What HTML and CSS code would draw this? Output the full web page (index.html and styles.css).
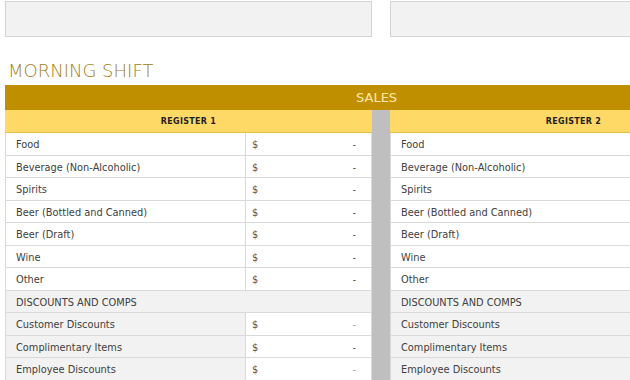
FILE: index.html
```html
<!DOCTYPE html>
<html>
<head>
<meta charset="utf-8">
<link rel="stylesheet" href="styles.css">
</head>
<body>
<div class="page">
  <div class="top">
    <div class="box box-a"></div>
    <div class="box box-b"></div>
  </div>
  <h1 class="title">MORNING SHIFT</h1>
  <div class="sales">SALES</div>
  <div class="tables">
    <div class="reg">
      <div class="head">REGISTER 1</div>
      <div class="row"><div class="lbl">Food</div><div class="val"><span>$</span><span>-</span></div></div>
      <div class="row"><div class="lbl">Beverage (Non-Alcoholic)</div><div class="val"><span>$</span><span>-</span></div></div>
      <div class="row"><div class="lbl">Spirits</div><div class="val"><span>$</span><span>-</span></div></div>
      <div class="row"><div class="lbl">Beer (Bottled and Canned)</div><div class="val"><span>$</span><span>-</span></div></div>
      <div class="row"><div class="lbl">Beer (Draft)</div><div class="val"><span>$</span><span>-</span></div></div>
      <div class="row"><div class="lbl">Wine</div><div class="val"><span>$</span><span>-</span></div></div>
      <div class="row"><div class="lbl">Other</div><div class="val"><span>$</span><span>-</span></div></div>
      <div class="row section"><div class="lbl span">DISCOUNTS AND COMPS</div></div>
      <div class="row disc"><div class="lbl">Customer Discounts</div><div class="val"><span>$</span><span class="dim">-</span></div></div>
      <div class="row disc"><div class="lbl">Complimentary Items</div><div class="val"><span>$</span><span>-</span></div></div>
      <div class="row disc"><div class="lbl">Employee Discounts</div><div class="val"><span>$</span><span class="dim">-</span></div></div>
    </div>
    <div class="divider"></div>
    <div class="reg">
      <div class="head">REGISTER 2</div>
      <div class="row"><div class="lbl">Food</div><div class="val"></div></div>
      <div class="row"><div class="lbl">Beverage (Non-Alcoholic)</div><div class="val"></div></div>
      <div class="row"><div class="lbl">Spirits</div><div class="val"></div></div>
      <div class="row"><div class="lbl">Beer (Bottled and Canned)</div><div class="val"></div></div>
      <div class="row"><div class="lbl">Beer (Draft)</div><div class="val"></div></div>
      <div class="row"><div class="lbl">Wine</div><div class="val"></div></div>
      <div class="row"><div class="lbl">Other</div><div class="val"></div></div>
      <div class="row section"><div class="lbl span">DISCOUNTS AND COMPS</div></div>
      <div class="row section"><div class="lbl">Customer Discounts</div><div class="val"></div></div>
      <div class="row section"><div class="lbl">Complimentary Items</div><div class="val"></div></div>
      <div class="row section"><div class="lbl">Employee Discounts</div><div class="val"></div></div>
    </div>
  </div>
</div>
</body>
</html>
```
FILE: styles.css
```css
html, body {
  margin: 0;
  padding: 0;
  background: #ffffff;
  overflow: hidden;
}
body {
  width: 630px;
  height: 380px;
  font-family: "DejaVu Sans", sans-serif;
}
.page {
  padding: 1px 0 0 5px;
  width: 760px;
}
.top {
  display: flex;
  gap: 18px;
}
.box {
  height: 34px;
  background: #f2f2f2;
  border: 1px solid #d4d4d4;
}
.box-a { width: 365px; }
.box-b { width: 365px; }
.title {
  margin: 20px 0 0 3px;
  height: 28px;
  font-family: "DejaVu Sans", sans-serif;
  font-weight: 200;
  font-size: 18px;
  line-height: 28px;
  color: #a08019;
}
.sales {
  width: 625px;
  height: 25px;
  background: #bf8f00;
  color: #ffe9a8;
  font-size: 13px;
  line-height: 25px;
  text-indent: 351px;
}
.tables {
  display: grid;
  grid-template-columns: 367px 18px 367px;
}
.divider {
  background: #bfbfbf;
}
.reg {
  display: flex;
  flex-direction: column;
}
.head {
  height: 22px;
  background: #ffd966;
  border-bottom: 1px solid #e6c04a;
  font-size: 8px;
  font-weight: bold;
  color: #1f1f1f;
  line-height: 23px;
  text-align: center;
  letter-spacing: 0.3px;
}
.row {
  height: 22.5px;
  display: grid;
  grid-template-columns: 240px 127px;
  border-bottom: 1px solid #d9d9d9;
  box-sizing: border-box;
  font-size: 9.8px;
  color: #404040;
  overflow: hidden;
}
.lbl {
  padding-left: 10px;
  padding-top: 2px;
  line-height: 19px;
  border-left: 1px solid #d9d9d9;
  background: #ffffff;
  white-space: nowrap;
}
.val {
  display: flex;
  justify-content: space-between;
  padding: 2px 15px 0 6px;
  line-height: 19px;
  border-left: 1px solid #d9d9d9;
  border-right: 1px solid #d9d9d9;
  color: #555555;
  background: #ffffff;
}
.dim { color: #9a9a9a; }
.lbl.span {
  grid-column: 1 / 3;
  border-right: 1px solid #d9d9d9;
}
.section .lbl, .section .val { background: #f2f2f2; }
.disc .lbl { background: #f2f2f2; }
```
